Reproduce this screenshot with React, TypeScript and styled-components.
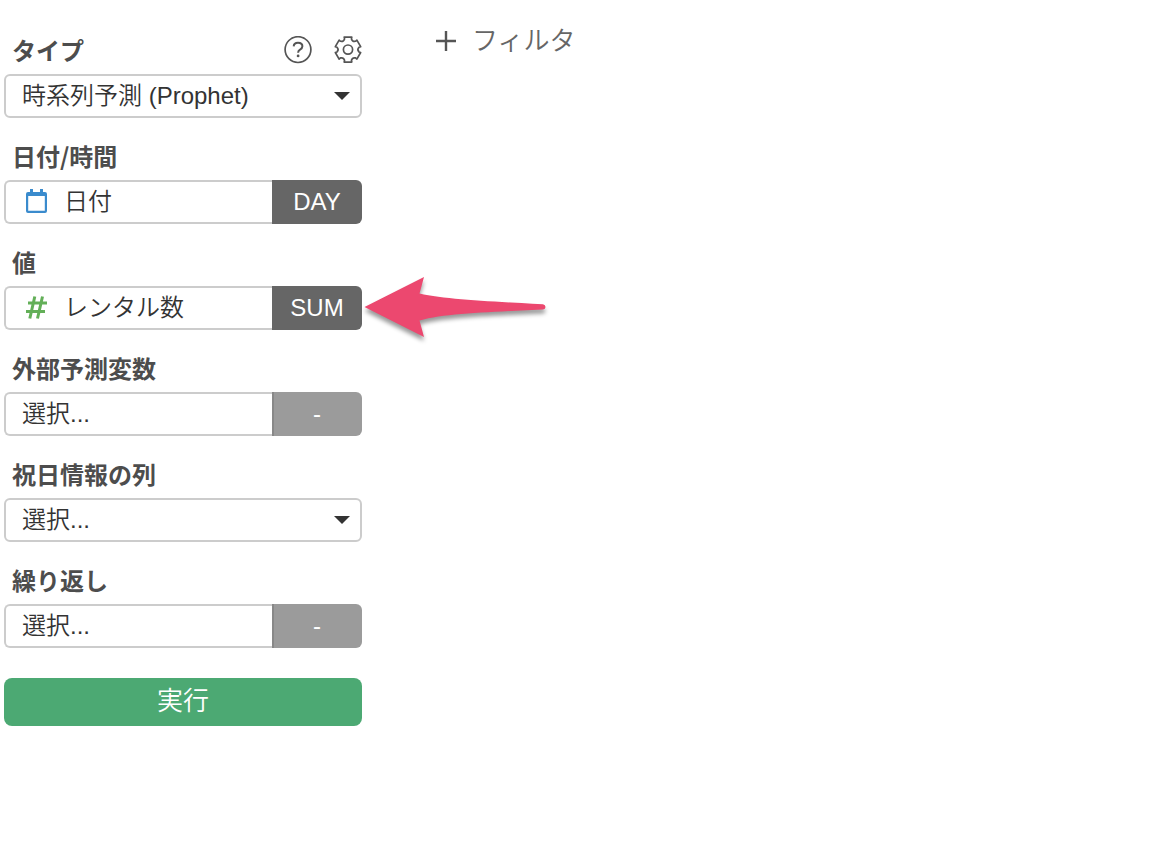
import React from "react";
import styled, { createGlobalStyle } from "styled-components";

const GlobalStyle = createGlobalStyle`
  *, *::before, *::after { box-sizing: border-box; }
  body {
    margin: 0;
    background: #fff;
    color: #333;
    font-family: "Liberation Sans", "Noto Sans CJK JP", sans-serif;
    font-size: 24px;
    font-weight: 350;
    line-height: 36px;
  }
  button, select { font: inherit; color: inherit; }
`;

const Page = styled.div`
  display: flex;
  align-items: flex-start;
  gap: 72px;
  padding: 0 4px;
`;

const Sidebar = styled.form`
  flex: 0 1 358px;
  display: flex;
  flex-direction: column;
  gap: 20px;
  padding: 32px 0 24px;
`;

const Field = styled.div`
  display: flex;
  flex-direction: column;
  gap: 6px;
`;

const LabelRow = styled.div`
  display: flex;
  align-items: center;
  justify-content: space-between;
  height: 36px;
  padding-left: 8px;
`;

const Label = styled.label`
  color: #4d4d4d;
  font-family: "Noto Sans CJK JP", sans-serif;
  font-weight: 700;
`;

const Tools = styled.div`
  display: flex;
  gap: 22px;
`;

const IconButton = styled.button`
  display: flex;
  padding: 0;
  border: 0;
  background: none;
  color: #555;
  cursor: pointer;
`;

const SelectBox = styled.div`
  display: grid;
  align-items: center;

  & > * { grid-area: 1 / 1; }
`;

const Select = styled.select`
  appearance: none;
  width: 100%;
  height: 44px;
  padding: 0 40px 0 16px;
  border: 2px solid #ccc;
  border-radius: 6px;
  background: #fff;
`;

const Caret = styled.svg`
  justify-self: end;
  margin-right: 12px;
  pointer-events: none;
`;

const Split = styled.div`
  position: relative;
  display: flex;
  height: 44px;
`;

const ColumnButton = styled.button`
  flex: 1;
  display: flex;
  align-items: center;
  gap: 14px;
  min-width: 0;
  padding: 0 16px;
  border: 2px solid #ccc;
  border-right: 0;
  border-radius: 6px 0 0 6px;
  background: #fff;
  text-align: left;
  white-space: nowrap;
`;

const FunctionButton = styled.button`
  flex: 0 0 90px;
  padding: 0;
  border: 0;
  border-radius: 0 6px 6px 0;
  background: #666;
  color: #fff;

  &:disabled {
    box-shadow: inset 2px 0 #888;
    background: #9b9b9b;
    color: #fff;
  }
`;

const Pointer = styled.svg`
  position: absolute;
  top: -16px;
  left: 100%;
  overflow: visible;
  pointer-events: none;
  filter: drop-shadow(0 4px 2px rgba(0, 0, 0, 0.4));
`;

const RunButton = styled.button`
  height: 48px;
  margin-top: 10px;
  padding: 0 0 2px;
  border: 0;
  border-radius: 8px;
  background: #4ca973;
  color: #fff;
  font-size: 26px;
  cursor: pointer;
`;

const Main = styled.main`
  flex: 1;
  padding-top: 23px;
`;

const FilterButton = styled.button`
  display: flex;
  align-items: center;
  gap: 14px;
  padding: 0;
  border: 0;
  background: none;
  color: #666;
  font-size: 26px;
  cursor: pointer;
`;

const polar = (radius: number, degrees: number) => {
  const t = (degrees * Math.PI) / 180;
  return `${(14 + radius * Math.cos(t)).toFixed(2)} ${(14 + radius * Math.sin(t)).toFixed(2)}`;
};

const gearPath =
  [30, 90, 150, 210, 270, 330]
    .map(
      (a, i) =>
        `${i ? "L" : "M"}${polar(13, a - 17)}L${polar(13, a + 17)}L${polar(11.2, a + 18)}Q${polar(8.8, a + 30)} ${polar(11.2, a + 42)}`
    )
    .join("") + "Z";

const HelpIcon = () => (
  <svg width="28" height="28" viewBox="0 0 28 28" fill="none" stroke="currentColor" aria-hidden="true">
    <circle cx="14" cy="13.6" r="12.9" strokeWidth="1.7" />
    <path d="M9.7 10.4C9.8 7.9 11.5 6.7 14 6.7c2.600 0 4.400 1.300 4.400 3.500 0 1.800-1.100 2.600-2.400 3.500-1.400.9-1.900 1.500-1.900 3.100" strokeWidth="2" />
    <circle cx="14.1" cy="19.9" r="1.4" fill="currentColor" stroke="none" />
  </svg>
);

const GearIcon = () => (
  <svg width="28" height="28" viewBox="0 0.4 28 28" overflow="visible" fill="none" stroke="currentColor" strokeWidth="1.7" strokeLinejoin="round" aria-hidden="true">
    <path d={gearPath} />
    <circle cx="14" cy="14" r="4.6" />
  </svg>
);

const CalendarIcon = () => (
  <svg width="28" height="28" viewBox="0 0 28 28" aria-hidden="true">
    <path
      fill="#3a8bcd"
      fillRule="evenodd"
      d="M8 1h3v3h7V1h3v3h2a2 2 0 0 1 2 2v17a2 2 0 0 1-2 2H6a2 2 0 0 1-2-2V6a2 2 0 0 1 2-2h2zM6.200 8v14.800h16.600V8z"
    />
  </svg>
);

const HashIcon = () => (
  <svg width="28" height="28" viewBox="0 0 28 28" fill="none" stroke="#63af58" strokeWidth="3" aria-hidden="true">
    <path d="M12.800 2.500L7.800 24.500M20.500 2.500L15.500 24.500M6 9H25M4 17.500H23" />
  </svg>
);

const CaretIcon = () => (
  <Caret width="16" height="8" viewBox="0 0 16 8" aria-hidden="true">
    <path d="M0 0H16L8 8Z" fill="#333" />
  </Caret>
);

const ArrowPointer = () => (
  <Pointer width="190" height="70" viewBox="0 0 190 70" aria-hidden="true">
    <path
      fill="#ec486f"
      d="M2.5 37L62 7L57.5 23.5C84 29.500 130 31.500 181 34.200Q183.500 34.600 183.500 37Q183.500 39.400 181 39.600C130 42 84 43 57.500 50.500L62 67Z"
    />
  </Pointer>
);

type SelectFieldProps = { id: string; label: string; value: string; tools?: React.ReactNode };

const SelectField = ({ id, label, value, tools }: SelectFieldProps) => (
  <Field>
    <LabelRow>
      <Label htmlFor={id}>{label}</Label>
      {tools}
    </LabelRow>
    <SelectBox>
      <Select id={id}>
        <option>{value}</option>
      </Select>
      <CaretIcon />
    </SelectBox>
  </Field>
);

type ColumnFieldProps = {
  id: string;
  label: string;
  value?: string;
  icon?: React.ReactNode;
  func?: string;
  pointer?: React.ReactNode;
};

const ColumnField = ({ id, label, value = "選択...", icon, func, pointer }: ColumnFieldProps) => (
  <Field>
    <LabelRow>
      <Label htmlFor={id}>{label}</Label>
    </LabelRow>
    <Split>
      <ColumnButton id={id} type="button">
        {icon}
        <span>{value}</span>
      </ColumnButton>
      <FunctionButton type="button" disabled={!func}>
        {func ?? "-"}
      </FunctionButton>
      {pointer}
    </Split>
  </Field>
);

export default function App() {
  return (
    <>
      <GlobalStyle />
      <Page>
        <Sidebar onSubmit={(e) => e.preventDefault()}>
          <SelectField
            id="type"
            label="タイプ"
            value="時系列予測 (Prophet)"
            tools={
              <Tools>
                <IconButton type="button" aria-label="ヘルプ">
                  <HelpIcon />
                </IconButton>
                <IconButton type="button" aria-label="設定">
                  <GearIcon />
                </IconButton>
              </Tools>
            }
          />
          <ColumnField id="date" label="日付/時間" value="日付" icon={<CalendarIcon />} func="DAY" />
          <ColumnField id="value" label="値" value="レンタル数" icon={<HashIcon />} func="SUM" pointer={<ArrowPointer />} />
          <ColumnField id="external" label="外部予測変数" />
          <SelectField id="holiday" label="祝日情報の列" value="選択..." />
          <ColumnField id="repeat" label="繰り返し" />
          <RunButton type="submit">実行</RunButton>
        </Sidebar>
        <Main>
          <FilterButton type="button">
            <svg width="24" height="24" viewBox="0 0 24 24" fill="none" stroke="#555" strokeWidth="2.4" aria-hidden="true">
              <path d="M2 12H22M12 2V22" />
            </svg>
            フィルタ
          </FilterButton>
        </Main>
      </Page>
    </>
  );
}
